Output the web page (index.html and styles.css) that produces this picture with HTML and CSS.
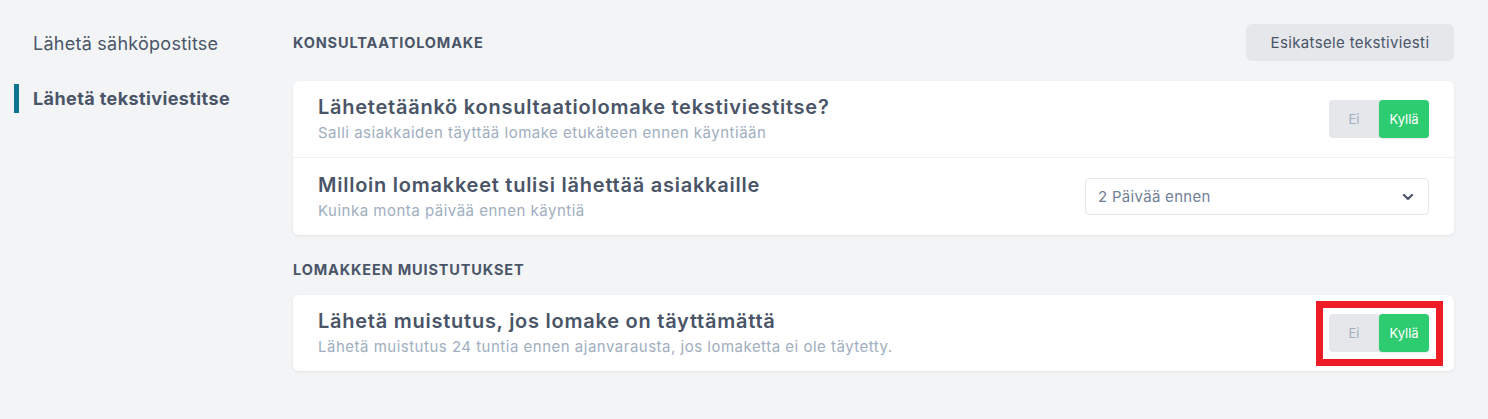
FILE: index.html
```html
<!DOCTYPE html>
<html lang="fi">
<head>
<meta charset="utf-8">
<link rel="stylesheet" href="styles.css">
</head>
<body>
<div class="page">
  <nav class="side">
    <div class="side-item">Lähetä sähköpostitse</div>
    <div class="side-item active">Lähetä tekstiviestitse</div>
  </nav>
  <main class="main">
    <div class="section-head">
      <h2 class="section-title">KONSULTAATIOLOMAKE</h2>
      <button class="btn">Esikatsele tekstiviesti</button>
    </div>
    <div class="card">
      <div class="row">
        <div class="row-text">
          <div class="row-title">Lähetetäänkö konsultaatiolomake tekstiviestitse?</div>
          <div class="row-sub">Salli asiakkaiden täyttää lomake etukäteen ennen käyntiään</div>
        </div>
        <div class="toggle">
          <span class="opt">Ei</span>
          <span class="opt on">Kyllä</span>
        </div>
      </div>
      <div class="row">
        <div class="row-text">
          <div class="row-title">Milloin lomakkeet tulisi lähettää asiakkaille</div>
          <div class="row-sub">Kuinka monta päivää ennen käyntiä</div>
        </div>
        <div class="select">
          <span>2 Päivää ennen</span>
          <svg class="chev" width="12" height="8" viewBox="0 0 12 8"><path d="M2 2l4 4 4-4" fill="none" stroke="#4a5568" stroke-width="2.2" stroke-linecap="round" stroke-linejoin="round"/></svg>
        </div>
      </div>
    </div>
    <div class="section-head second">
      <h2 class="section-title">LOMAKKEEN MUISTUTUKSET</h2>
    </div>
    <div class="card">
      <div class="row">
        <div class="row-text">
          <div class="row-title">Lähetä muistutus, jos lomake on täyttämättä</div>
          <div class="row-sub">Lähetä muistutus 24 tuntia ennen ajanvarausta, jos lomaketta ei ole täytetty.</div>
        </div>
        <div class="mark">
          <div class="toggle">
            <span class="opt">Ei</span>
            <span class="opt on">Kyllä</span>
          </div>
        </div>
      </div>
    </div>
  </main>
</div>
</body>
</html>
```
FILE: styles.css
```css
* { box-sizing: border-box; }
html, body { margin: 0; padding: 0; }
body {
  background: #f3f4f6;
  font-family: Inter, "Noto Sans", sans-serif;
  color: #4a5568;
  width: 1488px;
  height: 419px;
  overflow: hidden;
}
.page {
  display: flex;
  padding: 24px 34px 0 14px;
}
.side {
  width: 279px;
  flex: none;
  display: flex;
  flex-direction: column;
  gap: 26px;
  padding-top: 5px;
}
.side-item {
  font-size: 18px;
  line-height: 29px;
  padding-left: 19px;
  color: #4a5568;
  font-weight: 400;
  letter-spacing: 0.25px;
}
.side-item.active {
  font-weight: 700;
  border-left: 5px solid #0e7490;
  padding-left: 14px;
  color: #4a5568;
  letter-spacing: 0.4px;
}
.main {
  flex: 1;
  display: flex;
  flex-direction: column;
}
.section-head {
  display: flex;
  justify-content: space-between;
  align-items: center;
  height: 37px;
  margin-bottom: 20px;
}
.section-head.second {
  margin-top: 16px;
  height: 36px;
  margin-bottom: 8px;
}
.section-title {
  margin: 0;
  font-size: 14.5px;
  font-weight: 700;
  color: #4a5568;
  letter-spacing: 0.85px;
}
.btn {
  border: none;
  background: #e5e7eb;
  border-radius: 6px;
  width: 208px;
  height: 37px;
  font-family: inherit;
  font-size: 15px;
  color: #4a5568;
  padding: 0;
  letter-spacing: 0.35px;
}
.card {
  background: #fff;
  border-radius: 6px;
  box-shadow: 0 1px 3px rgba(0,0,0,0.07);
}
.row {
  display: flex;
  justify-content: space-between;
  align-items: center;
  padding: 0 25px;
  height: 76px;
}
.row + .row {
  border-top: 1px solid #eef0f3;
  height: 78px;
}
.row-title {
  font-size: 20px;
  font-weight: 600;
  color: #4a5568;
  line-height: 26px;
  letter-spacing: 0.75px;
}
.row-sub {
  font-size: 15px;
  color: #a0aec0;
  line-height: 22px;
  margin-top: 2px;
  letter-spacing: 0.5px;
}
.toggle {
  display: flex;
  width: 100px;
  height: 38px;
  background: #e5e7eb;
  border-radius: 4px;
}
.opt {
  flex: 1;
  display: flex;
  align-items: center;
  justify-content: center;
  font-size: 13px;
  color: #a0aec0;
}
.opt.on {
  background: #2ecc71;
  color: #fff;
  border-radius: 4px;
  box-shadow: 0 1px 2px rgba(0,0,0,0.1);
}
.mark {
  border: 7px solid #ee1c25;
  padding: 6px 7px 7px 6px;
  margin: -13px -14px -14px -13px;
}
.select {
  width: 344px;
  height: 37px;
  border: 1px solid #e2e8f0;
  border-radius: 4px;
  display: flex;
  align-items: center;
  justify-content: space-between;
  padding: 0 14px 0 12px;
  font-size: 15px;
  color: #718096;
  letter-spacing: 0.3px;
}
```
